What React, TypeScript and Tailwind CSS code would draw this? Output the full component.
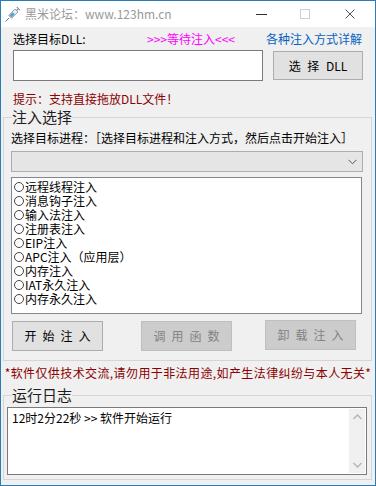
import React from 'react';

// 注入方式列表
const methods = [
  '远程线程注入',
  '消息钩子注入',
  '输入法注入',
  '注册表注入',
  'EIP注入',
  'APC注入（应用层）',
  '内存注入',
  'IAT永久注入',
  '内存永久注入',
];

const font = "font-['Noto_Sans_CJK_SC','Noto_Sans',sans-serif]";

// 标题栏小图标（针管）
const SyringeIcon = () => (
  <svg width="18" height="18" viewBox="0 0 18 18" aria-hidden="true">
    <line x1="1.5" y1="16.5" x2="5" y2="13" stroke="#6b7a86" strokeWidth="1" />
    <g transform="rotate(-45 9 9)">
      <rect x="5" y="7" width="9" height="4" fill="#e9eef2" stroke="#7d8b96" strokeWidth="0.8" />
      <rect x="5.5" y="7.6" width="4.5" height="2.8" fill="#4f9fd6" />
      <rect x="14" y="8.4" width="2.6" height="1.2" fill="#7d8b96" />
      <rect x="16.2" y="6.6" width="0.9" height="4.8" fill="#7d8b96" />
    </g>
  </svg>
);

const Button = ({ label, disabled }: { label: string; disabled?: boolean }) => (
  <div
    className={`flex h-[30px] w-[91px] items-center justify-center border text-[12px] tracking-[6px] pl-[6px] ${
      disabled
        ? 'border-[#bfbfbf] bg-[#cccccc] text-[#838383]'
        : 'border-[#adadad] bg-[#e1e1e1] text-black'
    }`}
  >
    {label}
  </div>
);

export default function App() {
  return (
    <div
      className={`flex h-[486px] w-[376px] flex-col border border-[#2b7bb8] bg-[#f0f0f0] text-[12px] text-black ${font}`}
    >
      {/* 标题栏 */}
      <div className="flex h-[26px] items-center bg-white">
        <div className="ml-[3px] flex h-[18px] w-[18px] items-center justify-center">
          <SyringeIcon />
        </div>
        <span className="ml-[3px] text-[12px] text-[#9a9a9a]">黑米论坛：www.123hm.cn</span>
        <div className="ml-auto flex h-full items-center">
          <div className="flex w-[44px] justify-center">
            <div className="h-px w-[11px] bg-[#333]" />
          </div>
          <div className="flex w-[44px] justify-center">
            <div className="h-[10px] w-[10px] border border-[#cfcfcf]" />
          </div>
          <div className="mr-[2px] flex w-[46px] justify-center">
            <svg width="10" height="10" viewBox="0 0 10 10" aria-hidden="true">
              <path d="M0.5 0.5 L9.5 9.5 M9.5 0.5 L0.5 9.5" stroke="#555" strokeWidth="1" />
            </svg>
          </div>
        </div>
      </div>

      {/* DLL 选择 */}
      <div className="mt-[4px] flex h-[16px] items-center pl-[12px] leading-[16px]">
        <span className="w-[134px]">选择目标DLL:</span>
        <span className="text-[#ff00ff]">&gt;&gt;&gt;等待注入&lt;&lt;&lt;</span>
        <span className="ml-auto mr-[13px] text-[#0563c1]">各种注入方式详解</span>
      </div>
      <div className="mt-[3px] flex items-start pl-[12px]">
        <div className="h-[31px] w-[250px] border border-[#7a7a7a] bg-white" />
        <div className="ml-[10px] mt-px flex h-[29px] w-[90px] items-center justify-center whitespace-pre border border-[#adadad] bg-[#e1e1e1] [word-spacing:4px]">
          选 择 DLL
        </div>
      </div>
      <div className="mt-[10px] h-[16px] pl-[12px] leading-[16px] text-[#8b0000]">
        提示：支持直接拖放DLL文件！
      </div>

      {/* 注入选择 */}
      <fieldset className="ml-[2px] mr-[3px] border border-[#d5d5d5] pb-[9px]">
        <legend className="ml-[8px] h-[20px] text-[15px] leading-[20px] text-[#1e1e1e]">注入选择</legend>
        <div className="mt-[3px] h-[16px] pl-[7px] leading-[16px]">
          选择目标进程：［选择目标进程和注入方式，然后点击开始注入］
        </div>
        <div className="ml-[7px] mt-[5px] flex h-[21px] w-[352px] items-center justify-end border border-[#adadad] bg-[#e5e5e5] pr-[5px]">
          <svg width="9" height="6" viewBox="0 0 9 6" aria-hidden="true">
            <path d="M0.5 0.8 L4.5 4.8 L8.5 0.8" fill="none" stroke="#555" strokeWidth="1" />
          </svg>
        </div>
        <div className="ml-[7px] mt-[5px] h-[137px] w-[351px] border border-[#828790] bg-white pl-[1px] pt-[2px]">
          {methods.map((m) => (
            <div key={m} className="flex h-[14px] items-center leading-[14px]">
              <span className="ml-px mr-px h-[10px] w-[10px] rounded-full border border-[#444]" />
              <span>{m}</span>
            </div>
          ))}
        </div>
        <div className="mt-[7px] flex items-start pl-[8px]">
          <Button label="开始注入" />
          <div className="ml-[38px]">
            <Button label="调用函数" disabled />
          </div>
          <div className="-mt-px ml-[33px]">
            <Button label="卸载注入" disabled />
          </div>
        </div>
      </fieldset>

      <div className="mt-[4px] h-[16px] text-center leading-[16px] tracking-[0.4px] text-[#8b0000]">
        *软件仅供技术交流,请勿用于非法用途,如产生法律纠纷与本人无关*
      </div>

      {/* 运行日志 */}
      <fieldset className="ml-[2px] mr-[3px] mt-[4px] border border-[#d5d5d5] pb-[4px]">
        <legend className="ml-[8px] h-[20px] text-[15px] leading-[20px] text-[#1e1e1e]">运行日志</legend>
        <div className="ml-[3px] mt-[2px] flex h-[68px] w-[360px] border border-[#7a7a7a] bg-white">
          <div className="flex-1 pl-[4px] pt-[2px] leading-[16px]">12时2分22秒 &gt;&gt; 软件开始运行</div>
          <div className="my-[1px] mr-[1px] flex w-[16px] flex-col items-center justify-between bg-[#f0f0f0] py-[5px]">
            <svg width="9" height="6" viewBox="0 0 9 6" aria-hidden="true">
              <path d="M0.5 5 L4.5 1 L8.5 5" fill="none" stroke="#b5b5b5" strokeWidth="1.5" />
            </svg>
            <svg width="9" height="6" viewBox="0 0 9 6" aria-hidden="true">
              <path d="M0.5 1 L4.5 5 L8.5 1" fill="none" stroke="#b5b5b5" strokeWidth="1.5" />
            </svg>
          </div>
        </div>
      </fieldset>
    </div>
  );
}
